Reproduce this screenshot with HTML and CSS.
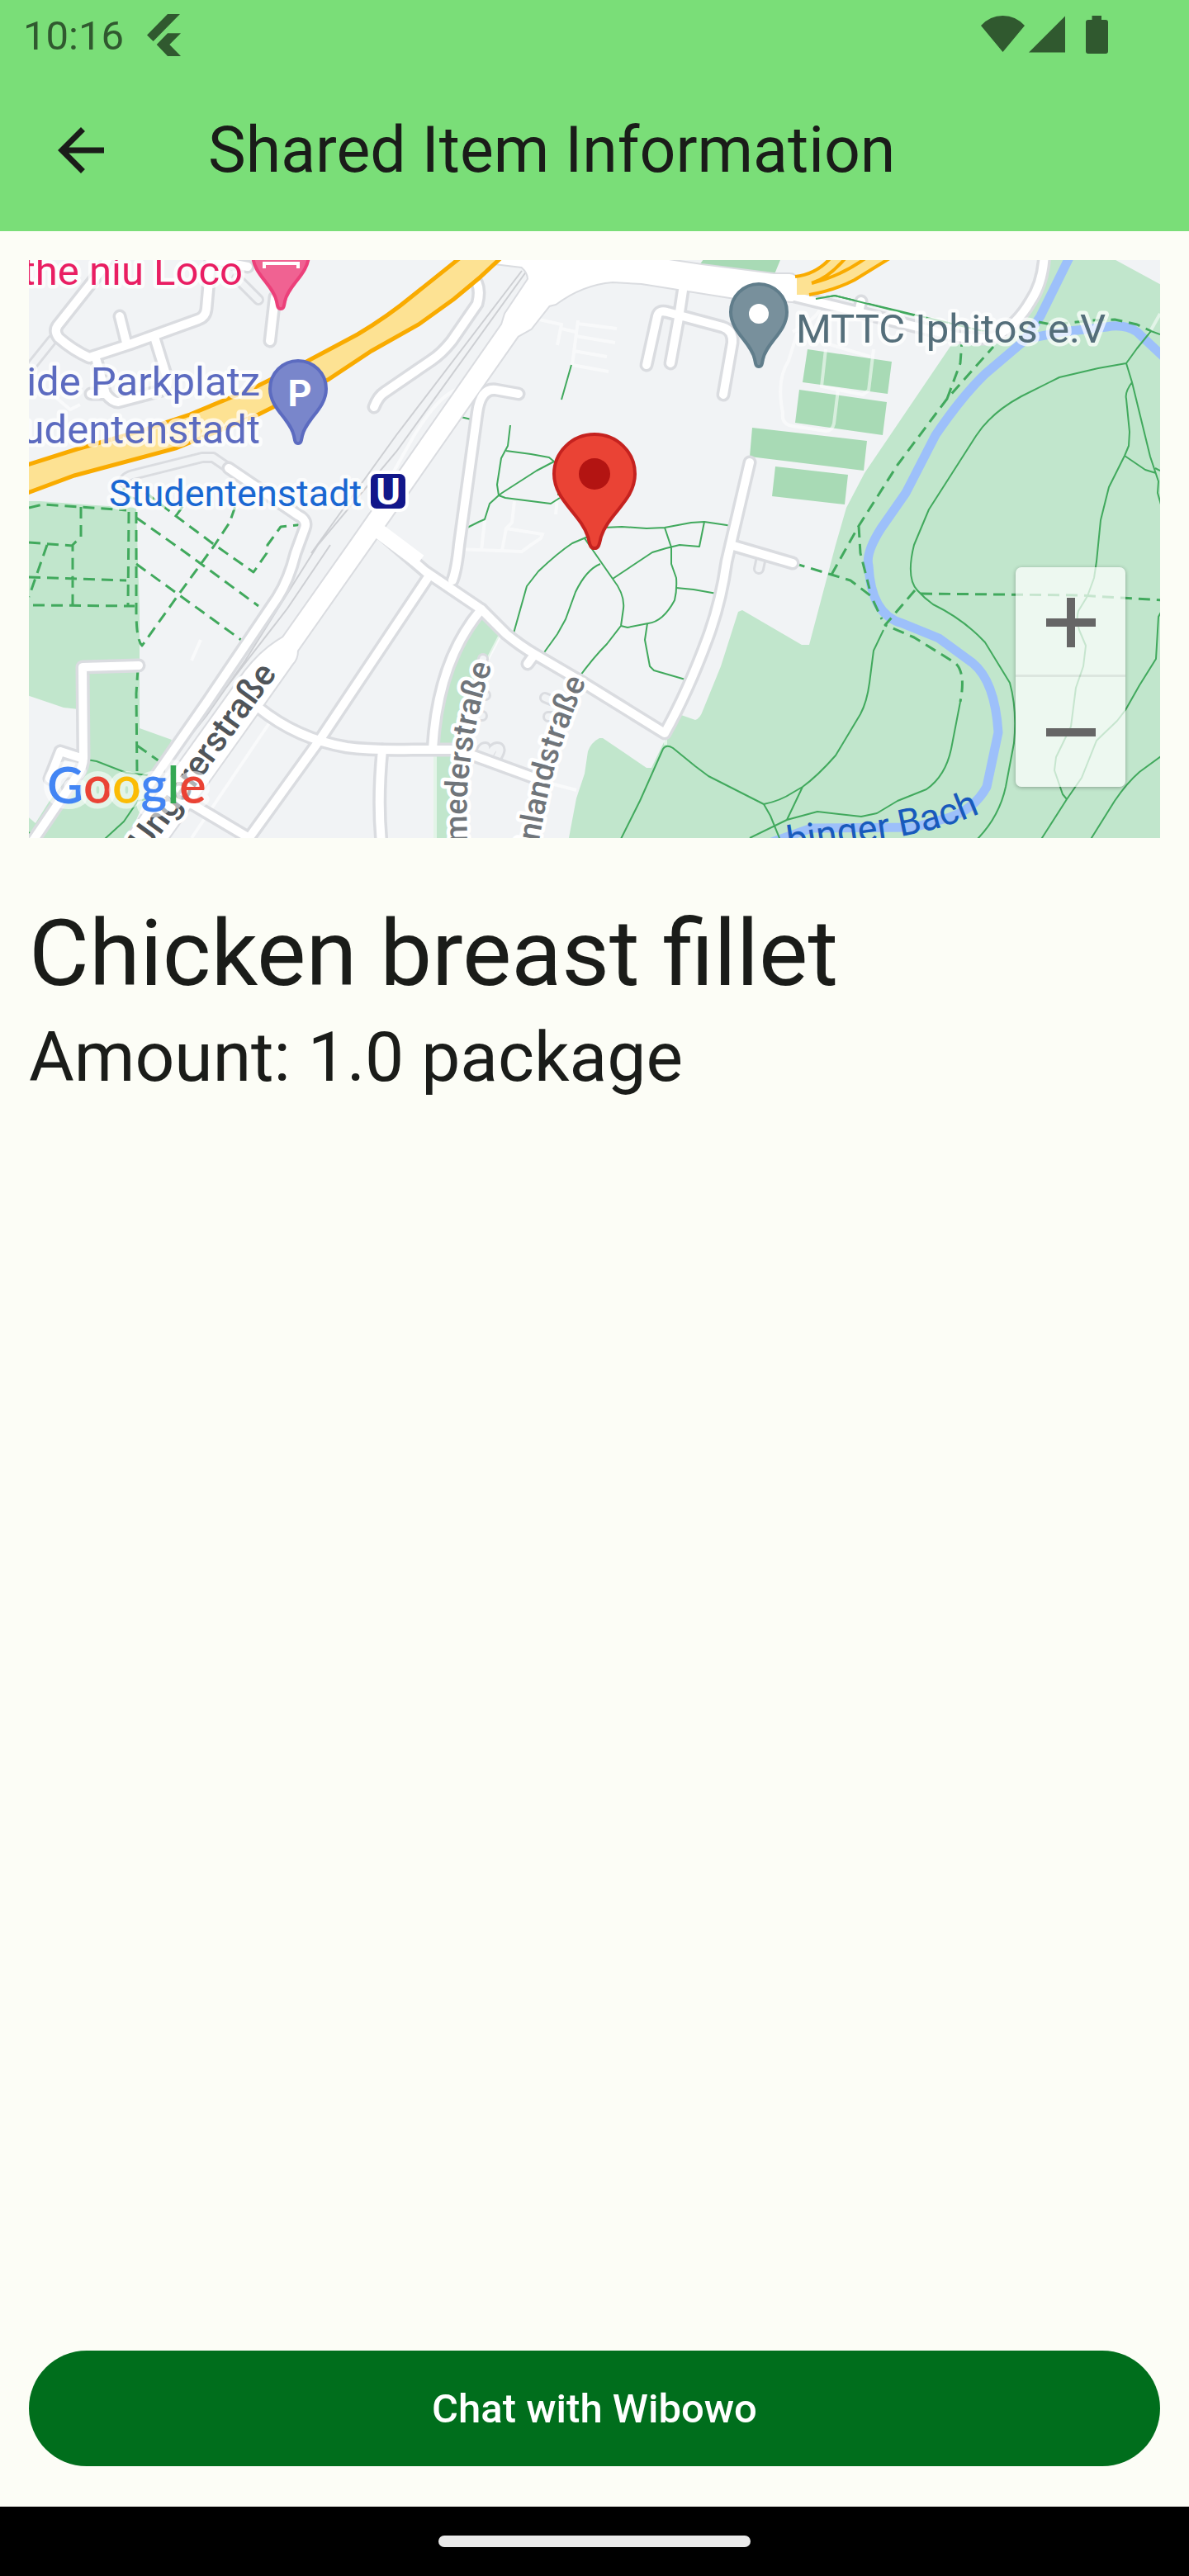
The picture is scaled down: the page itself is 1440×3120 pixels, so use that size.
FILE: index.html
```html
<!DOCTYPE html>
<html lang="en">
<head>
<meta charset="utf-8">
<meta name="viewport" content="width=device-width, initial-scale=1">
<title>Shared Item Information</title>
<link rel="stylesheet" href="styles.css">
</head>
<body>
<header class="top">
  <div class="status">
    <span class="clock">10:16</span>
    <svg class="flutter" viewBox="177 17 41 51" aria-hidden="true"><path d="M202 17h15L184.600 50 177 42.500zM202 40.300h16L204.300 54 218 68H202L188.700 54z"/></svg>
    <svg class="signals" viewBox="1188 19 154 46" aria-hidden="true">
      <path d="M1188 31Q1199 19 1214.500 19T1241 31L1214.500 63zM1290 19.500V63.500H1246z"/>
      <path d="M1322.500 19h11.500v5h5q3 0 3 3v35q0 3-3 3h-21q-3 0-3-3V27q0-3 3-3h4.500z"/>
    </svg>
  </div>
  <div class="appbar">
    <button class="back" type="button" aria-label="Back">
      <svg viewBox="0 0 24 24" aria-hidden="true"><path d="M20 11H7.830l5.590-5.590L12 4l-8 8 8 8 1.410-1.410L7.830 13H20z"/></svg>
    </button>
    <h1 class="title">Shared Item Information</h1>
  </div>
</header>

<main class="content">
  <div class="map">
    <svg class="map-canvas" viewBox="35 315 1370 700" role="img" aria-label="Map">
      <defs>
        <g id="streets">
          <path d="M130 315 123 327 70 394Q65 401 71 409Q88 424 108 433L157 417 240 387Q249 384 250 374L256 305"/>
          <path d="M145 383 153 415M187 408 203 460Q204 470 196 473L143 487Q136 487 128 477H110M117 437 128 477M265 316 300 323M333 360 327 413"/>
          <path d="M453 493Q458 480 466 475L523 436Q535 428 547 413L578 368Q584 345 571 334"/>
          <path d="M277 567 361 624Q373 630 369 640L358 670Q350 702 336 724L253 847 180 952"/>
          <path d="M303 1013 388 895 520 697M450 636 515 692 583 738 613 768Q630 782 647 792L700 823 805 888Q833 838 857 773Q873 730 880 680L908 560"/>
          <path d="M885 660 960 682M583 738Q530 800 524 907M313 857Q360 895 420 905Q450 909 500 908H547L573 915 655 945"/>
          <path d="M463 908Q457 970 462 1020M226 970 300 1014M548 703Q553 690 556 660L578 500Q582 470 600 472L628 477"/>
          <path d="M168 806 100 808 101 917Q101 929 93 940L40 1018M73 910 101 919M73 910 60 943"/>
          <path d="M828 345 822 385 812 440M783 442 796 383Q798 375 808 378L875 396Q888 400 887 415L876 478"/>
          <path d="M950 356 1040 378 1107 395 1160 408Q1190 412 1205 408Q1232 393 1248 365Q1265 340 1265 300M1040 378 1043 365M647 793 639 804"/>
        </g>
        <path id="lane" d="M287 337 313 363M150 584Q150 577 165 574L245 554H258L277 567M63 412 35 447M922 675 919 689M660 845 672 850M664 868 672 868M588 842 580 842M584 867 574 867M581 915Q583 905 588 905Q590 908 586 920M600 920Q610 905 602 905Q597 905 592 917M585 798 580 815"/>
        <path id="mainroad" d="M590 280V318L632 323Q640 330 640 338L612 380 608 393 422 660 343 772 335 777Q315 790 297 813L150 1018H202L313 862 354 804Q360 798 360 788L450 660 627 407 643 398 665 370 673 368Q705 344 742 341L777 343 890 361 960 365Q966 362 966 340 964 332 956 332L937 332 850 321 810 315V280z"/>
        <path id="poi" d="M0 0C-4 0-4-4-5-9C-9-29-34-42-34-66A34 34 0 0 1 34-66C34-42 9-29 5-9C4-4 4 0 0 0z"/>
        <path id="labelMeder" d="M566 1090V1015Q564 960 569 927Q577 860 596 806"/>
        <path id="labelInland" d="M641 1070 654 1013 660 980Q668 940 677 913Q690 870 710 825"/>
        <path id="labelBach" d="M942 1035 1007 1025 1073 1016Q1140 1006 1187 985"/>
      </defs>

      <rect class="land" x="35" y="315" width="1370" height="700"/>

      <path class="park" d="M30 607H48L115 612 165 615 169 740V882L208 896 153 1020H30z"/>
      <path class="land" d="M30 841 77 857 95 859 100 920 60 970 43 997 30 986z"/>
      <path class="park" d="M585 748 608 765 590 800Q560 880 547 1020H525V900L535 840 555 790zM1268 310H1342L1410 347V1020H688L698 967 708 937 712 910Q716 899 726 894H730L783 930H789L805 897 825 866 842 872Q848 870 851 861L873 807 894 741 899 739 971 781H980L1012 660 1025 615 1047 573 1152 418 1207 410 1240 383 1262 350z"/>
      <path class="pitch" d="M978 423 1080 438 1075 477 972 463zM968 472 1074 487 1069 527 963 512zM911 518 1050 534 1046 570 908 553zM939 565 1027 575 1023 611 935 601zM855 310H947L938 332 847 321z"/>

      <path class="river" d="M1296 310 1260 383 1240 413 1193 453Q1165 480 1133 527L1097 597 1067 640Q1048 670 1052 685 1055 745 1093 755L1137 773 1178 803Q1205 825 1209 887L1195 953Q1180 980 1150 990L1107 1002 983 1003 935 1020M1235 412 1287 402 1340 396Q1362 392 1377 402L1410 433"/>

      <g class="faint">
        <path d="M653 387 680 393 675 418M680 398 697 402M700 388 693 442 737 450M700 392 747 398M697 407 745 415M695 425 735 432"/>
        <path d="M623 607 620 633 613 640 608 667M613 640 657 647 655 652 643 660 632 668 553 665M587 630 583 667M675 603 673 623"/>
        <path d="M1000 423 995 468 1045 478 1052 473 1058 423M1054 432 965 405 955 437Q940 460 948 500Q946 514 960 516L1000 522Q1008 522 1010 513L1015 472M960 402Q998 380 992 370"/>
        <path d="M553 472Q530 480 500 530L438 640M328 873 232 1015M243 775 232 800M652 945 698 957M527 912V1015M806 890V902M608 765 590 800M1405 380 1391 405M66 480 85 496 97 490"/>
      </g>

      <g class="trail">
        <path d="M692 442 680 484M558 505 575 509M618 515 615 540 607 555 602 587 604 600 593 610 587 629 580 632 562 641M613 546 643 550 665 554 671 559 650 570 608 597 604 600 612 603 667 610 678 603M676 600V590"/>
        <path d="M732 639 753 638 783 640 805 639 837 633 853 632 880 636 890 638M805 639 813 663V683L819 700Q820 715 817 727Q810 740 802 747T785 755L760 760 752 758M853 632 847 662 823 660Q805 664 790 669L742 701"/>
        <path d="M712 650 693 658Q675 670 652 692L638 710 622 767M708 652 742 701Q757 720 755 737L752 758 735 780Q718 797 700 822M727 683Q710 690 697 717L685 750 675 768 657 793M819 712 840 714 868 719M784 755 781 775 787 807 792 812 830 823"/>
        <path d="M750 1020 775 970 803 907Q807 901 815 906L842 928 858 940 925 974 933 988 946 1020M925 974Q945 970 960 960L972 953Q990 940 1012 915L1042 865Q1050 850 1053 827L1058 788 1070 763M972 953 953 993 908 1015M953 993 990 983 1043 989 1062 985 1087 970 1122 956Q1145 940 1152 907L1163 850"/>
        <path d="M1405 405 1394 401 1377 422 1364 440 1330 446 1283 457 1237 480Q1200 500 1182 528L1125 617 1107 660Q1097 700 1111 715 1120 725 1130 732 1167 750 1193 778L1223 827Q1232 860 1228 900L1218 953Q1210 990 1182 1018"/>
        <path d="M1364 440 1371 463 1393 553 1403 583 1402 597 1408 618M1371 463Q1362 475 1364 483L1368 523 1367 540 1362 552 1343 590 1333 630 1328 680 1325 700 1317 722 1306 740Q1303 750 1307 763L1315 782 1312 807 1303 833 1297 880 1279 917 1277 933 1287 962 1292 968M1362 552 1387 569 1400 573M1399 567 1405 570"/>
        <path d="M1260 1018 1292 968 1310 942 1328 897 1353 873 1363 860 1380 830 1400 798 1403 747 1408 738M1320 1018 1350 970Q1365 948 1380 935L1410 913M105 920 117 922 153 936 180 939M190 965 167 970 150 995 127 1016M35 1008 40 1012"/>
        <path d="M988 362 1011 358 1207 405"/>
      </g>
      <g class="trail dashed">
        <path d="M1115 719 1307 721 1410 727"/>
        <path d="M1108 715 1072 757 1107 772 1157 803Q1170 815 1163 850"/>
        <path d="M961 682 1007 696 1030 703 1055 722 1068 750"/>
        <path d="M1007 696 1040 637 1087 563 1147 483 1203 420M1147 483 1163 440 1165 413M1040 637 1042 670 1053 713"/>
        <path d="M1258 390 1273 393 1323 388 1350 387 1377 393 1394 401"/>
        <path d="M35 615 52 611 98 614 153 618M98 614V650L88 660V733M35 657 88 661M57 660 43 700 35 723M35 699 153 703M40 733 163 734M156 620 155 733"/>
        <path d="M165 620V740Q165 775 172 782L217 719 260 660 278 633 285 613M165 627 223 668 313 734M165 683 292 775"/>
        <path d="M150 580V600L170 606M177 597 213 625 260 660 307 693 323 670 324 660 340 638 368 635M213 625 233 597"/>
        <path d="M167 810 165 840 166 937M166 903 193 922"/>
      </g>

      <path class="rail" d="M638 328 480 547 385 660 297 800 250 867 197 933M632 328 480 527 377 670M400 660 348 737 253 860 205 915"/>

      <use class="lane-casing" href="#lane"/>
      <use class="lane-fill" href="#lane"/>
      <use class="street-casing" href="#streets"/>
      <use class="mainroad-edge" href="#mainroad"/>
      <use class="street-fill" href="#streets"/>
      <use class="mainroad-fill" href="#mainroad"/>
      <path class="wide" d="M452 638 508 680"/>
      <path class="trail" d="M988 362 1011 358 1107 382"/>

      <path class="motorway" d="M20 567 93 544 167 523 230 502 307 470 373 437 433 405Q470 383 500 358L570 302 620 300 580 337 550 362 507 393 450 425 397 460 313 502 213 543 90 576 20 602z"/>
      <path class="motorway-fill" d="M965 335 987 327 1003 315 1078 315 1035 340 990 357 965 357z"/>
      <path class="motorway-edge" d="M963 335Q990 332 1008 310M983 343Q1005 336 1026 310M983 343Q1020 334 1052 310M1082 310 1035 339Q1010 352 980 357"/>

      <g class="label label-pink"><text x="294" y="345" text-anchor="end">the niu Loco</text></g>
      <g class="label label-purple">
        <text x="315" y="479" text-anchor="end">ide Parkplatz</text>
        <text x="315" y="537" text-anchor="end">udentenstadt</text>
      </g>
      <text class="label label-slate" x="964" y="415">MTTC Iphitos e.V</text>
      <text class="label label-blue" x="132" y="613">Studentenstadt</text>
      <text class="label label-dark" x="336" y="816" text-anchor="end" transform="rotate(-54 336 816)">Ungererstraße</text>
      <text class="label label-gray"><textPath href="#labelMeder" startOffset="100%" text-anchor="end">mmederstraße</textPath></text>
      <text class="label label-gray"><textPath href="#labelInland" startOffset="100%" text-anchor="end">inlandstraße</textPath></text>
      <text class="label label-water"><textPath href="#labelBach" startOffset="100%" text-anchor="end">binger Bach</textPath></text>

      <use class="pin pin-pink" href="#poi" x="340" y="374"/>
      <path class="bed" d="M320 325V319H361V325M322 310H334V315"/>
      <use class="pin pin-purple" href="#poi" x="361" y="537"/>
      <text class="glyph" x="363" y="492" text-anchor="middle">P</text>
      <use class="pin pin-slate" href="#poi" x="919" y="444"/>
      <circle class="dot" cx="919" cy="380" r="12"/>
      <rect class="ubahn" x="447" y="572" width="46" height="46" rx="9"/>
      <text class="glyph" x="470" y="611" text-anchor="middle">U</text>

      <path class="pin pin-red" d="M720 664C714 664 714 657 712 650C703 622 671 606 671 574A49 48 0 0 1 769 574C769 606 737 622 728 650C726 657 726 664 720 664z"/>
      <circle class="pin-core" cx="720" cy="574" r="19"/>

      <text class="google" x="57" y="973"><tspan class="g-blue">G</tspan><tspan class="g-red">o</tspan><tspan class="g-yellow">o</tspan><tspan class="g-blue">g</tspan><tspan class="g-green">l</tspan><tspan class="g-red">e</tspan></text>
    </svg>
    <div class="zoom">
      <button class="zoom-button" type="button" aria-label="Zoom in"><svg viewBox="0 0 60 60" aria-hidden="true"><path d="M25 0H35V25H60V35H35V60H25V35H0V25H25z"/></svg></button>
      <button class="zoom-button" type="button" aria-label="Zoom out"><svg viewBox="0 0 60 60" aria-hidden="true"><path d="M0 25H60V35H0z"/></svg></button>
    </div>
  </div>

  <section class="item">
    <h2 class="item-name">Chicken breast fillet</h2>
    <p class="item-amount">Amount: 1.0 package</p>
  </section>

  <button class="chat" type="button">Chat with Wibowo</button>
</main>

<footer class="navbar"><span class="handle"></span></footer>
</body>
</html>
```
FILE: styles.css
```css
* { box-sizing: border-box; }

body {
  margin: 0;
  min-height: 100vh;
  display: flex;
  flex-direction: column;
  background: #fcfdf6;
  color: #1a1c19;
  font-family: Roboto, "Liberation Sans", sans-serif;
}

svg { display: block; }
button { border: 0; padding: 0; font: inherit; cursor: pointer; }

/* Header */
.top { background: #7ade78; }
.status {
  display: flex;
  align-items: center;
  height: 84px;
  padding: 0 98px 0 28px;
  color: #30592f;
  fill: #30592f;
}
.clock { padding-top: 4px; font-size: 49px; line-height: 56px; }
.flutter { width: 41px; height: 51px; margin-left: 28px; }
.signals { width: 154px; height: 46px; margin-left: auto; }
.appbar {
  display: flex;
  align-items: center;
  gap: 84px;
  height: 196px;
  padding: 0 28px;
}
.back {
  display: grid;
  place-items: center;
  width: 140px;
  height: 140px;
  background: none;
}
.back svg { width: 84px; height: 84px; fill: #1a1c19; }
.title { margin: 0; font-size: 77px; line-height: 98px; font-weight: 400; }

/* Body */
.content {
  flex: 1;
  display: flex;
  flex-direction: column;
  padding: 35px 35px 49px;
}
.item { padding-top: 70px; }
.item-name { margin: 0; font-size: 112px; line-height: 140px; font-weight: 400; }
.item-amount { margin: 0; font-size: 84px; line-height: 112px; }
.chat {
  height: 140px;
  margin-top: auto;
  border-radius: 70px;
  background: #006e1c;
  color: #fff;
  font-size: 49px;
  font-weight: 500;
}

.navbar {
  display: grid;
  place-items: center;
  height: 84px;
  background: #000;
}
.handle { width: 378px; height: 14px; border-radius: 7px; background: #eaeaea; }

/* Map */
.map { position: relative; }
.map-canvas { width: 100%; height: auto; overflow: hidden; }
.zoom {
  position: absolute;
  right: 42px;
  bottom: 62px;
  width: 133px;
  border-radius: 7px;
  background: rgba(255, 255, 255, 0.7);
  box-shadow: 0 1px 5px rgba(0, 0, 0, 0.3);
}
.zoom-button {
  display: grid;
  place-items: center;
  width: 100%;
  height: 133px;
  background: none;
}
.zoom-button + .zoom-button { box-shadow: 0 -3px 0 rgba(0, 0, 0, 0.07); }
.zoom-button svg { width: 60px; height: 60px; fill: #666; }

.land { fill: #f1f3f5; }
.park { fill: #c1e6cc; }
.pitch { fill: #a8dab5; }
.river { fill: none; stroke: #9dc0fa; stroke-width: 11; stroke-linejoin: round; }
.faint { fill: none; stroke: #fff; stroke-width: 4; opacity: 0.55; }
.trail { fill: none; stroke: #41a95d; stroke-width: 2; stroke-linejoin: round; }
.dashed { stroke-width: 3; stroke-dasharray: 14 8; }
.rail { fill: none; stroke: #cdcfd3; stroke-width: 2; }

.street-casing, .street-fill, .lane-casing, .lane-fill {
  fill: none;
  stroke-linecap: round;
  stroke-linejoin: round;
}
.street-casing { stroke: #dadce0; stroke-width: 17; }
.street-fill { stroke: #fff; stroke-width: 10; }
.lane-casing { stroke: #dadce0; stroke-width: 14; }
.lane-fill { stroke: #f1f3f5; stroke-width: 8; }
.mainroad-edge { fill: none; stroke: #dadce0; stroke-width: 4; }
.mainroad-fill { fill: #fff; }
.wide { stroke: #fff; stroke-width: 18; }

.motorway { fill: #fde293; stroke: #f9ab00; stroke-width: 5; }
.motorway-fill { fill: #fde293; }
.motorway-edge { fill: none; stroke: #f9ab00; stroke-width: 4; }

.label {
  font-size: 49px;
  stroke: rgba(255, 255, 255, 0.7);
  stroke-width: 9;
  stroke-linejoin: round;
  paint-order: stroke;
}
.label-pink { fill: #e91e63; }
.label-purple { fill: #5c6bc0; }
.label-slate { fill: #546e7a; }
.label-blue { font-size: 45px; fill: #1967d2; }
.label-dark { font-size: 42px; font-weight: 500; fill: #50555a; stroke: #fff; }
.label-gray { font-size: 38px; font-weight: 500; fill: #70757a; stroke: #fff; }
.label-water { font-size: 45px; fill: #185abc; stroke: none; }

.pin { stroke-width: 4; }
.pin-pink { fill: #f06292; stroke: #ec407a; }
.pin-purple { fill: #7986cb; stroke: #5c6bc0; }
.pin-slate { fill: #78909c; stroke: #607d8b; }
.pin-red { fill: #ea4335; stroke: #c5221f; }
.pin-core { fill: #b31412; }
.dot { fill: #fff; }
.bed { fill: none; stroke: #fff; stroke-width: 4; }
.glyph { fill: #fff; font-size: 45px; font-weight: 700; }
.ubahn { fill: #12178a; stroke: #fff; stroke-width: 4; }

.google {
  font-family: Lato, sans-serif;
  font-size: 61px;
  font-weight: 600;
  stroke: rgba(255, 255, 255, 0.55);
  stroke-width: 13;
  stroke-linejoin: round;
  paint-order: stroke;
}
.g-blue { fill: #4285f4; }
.g-red { fill: #ea4335; }
.g-yellow { fill: #fbbc04; }
.g-green { fill: #34a853; }
```
